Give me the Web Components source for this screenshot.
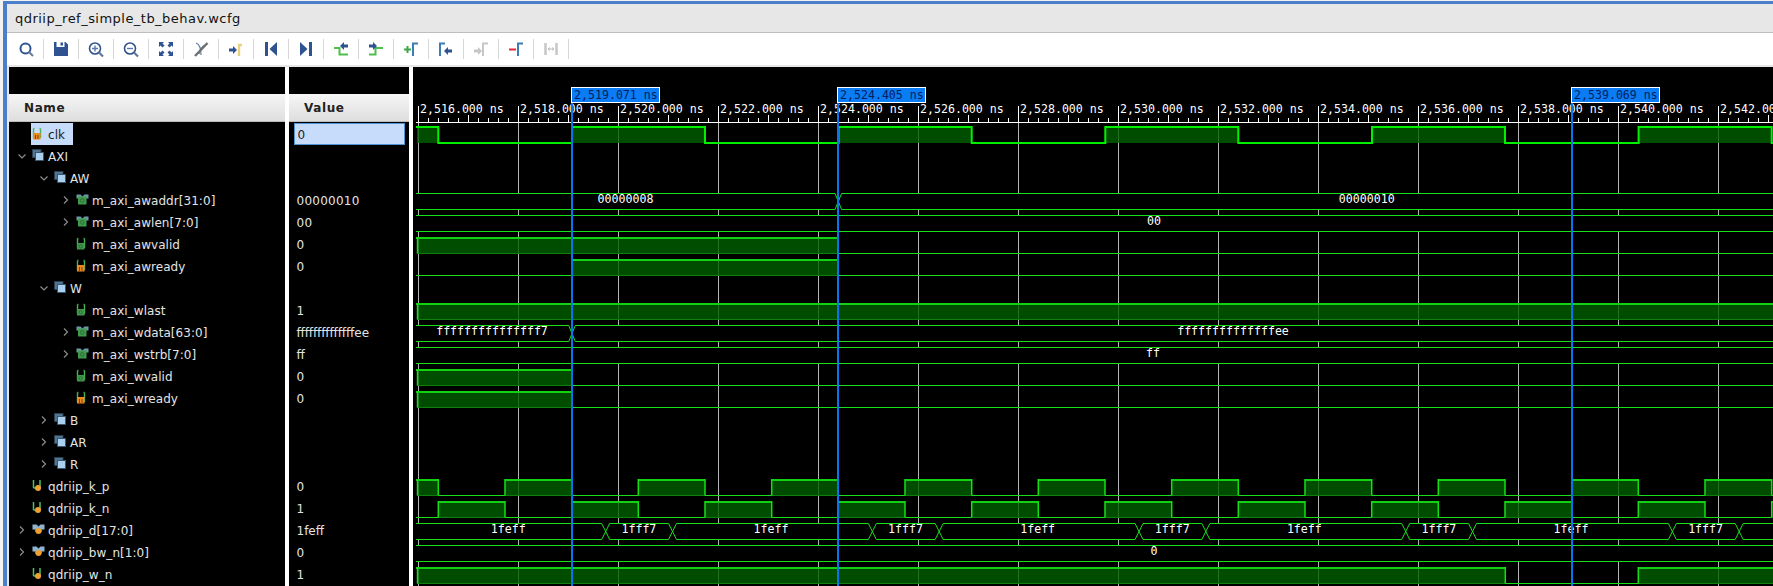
<!DOCTYPE html>
<html>
<head>
<meta charset="utf-8">
<title>qdriip_ref_simple_tb_behav.wcfg</title>
<style>
  html, body { margin: 0; height: 100%; background: #f2f2f2; overflow: hidden; }
  body { font-family: "DejaVu Sans", sans-serif; }
</style>
</head>
<body>
<wcfg-window title-text="qdriip_ref_simple_tb_behav.wcfg">
  <wave-toolbar></wave-toolbar>
  <wave-panel></wave-panel>
</wcfg-window>

<script>
// rows, top to bottom. icon: in/out = wire, bus-in = bus with green core, clk/bus-clk = orange dot
const ROWS = [
  { name:'clk', depth:0, icon:'out', value:'0', selected:true, wave:'clk' },
  { name:'AXI', depth:0, icon:'group', open:true },
  { name:'AW', depth:1, icon:'group', open:true },
  { name:'m_axi_awaddr[31:0]', depth:2, icon:'bus-in', open:false, value:'00000010', bus:{ hw:3.3, xs:[838.3], labels:[[625.5,'00000008'],[1366.7,'00000010']] } },
  { name:'m_axi_awlen[7:0]', depth:2, icon:'bus-in', open:false, value:'00', bus:{ xs:[], labels:[[1154,'00']] } },
  { name:'m_axi_awvalid', depth:2, icon:'in', value:'0', bit:{ start:1, edges:[838.3] } },
  { name:'m_axi_awready', depth:2, icon:'out', value:'0', bit:{ start:0, edges:[572,838.3] } },
  { name:'W', depth:1, icon:'group', open:true },
  { name:'m_axi_wlast', depth:2, icon:'in', value:'1', bit:{ start:1, edges:[] } },
  { name:'m_axi_wdata[63:0]', depth:2, icon:'bus-in', open:false, value:'ffffffffffffffee', bus:{ hw:3.3, xs:[572], labels:[[492,'fffffffffffffff7'],[1233,'ffffffffffffffee']] } },
  { name:'m_axi_wstrb[7:0]', depth:2, icon:'bus-in', open:false, value:'ff', bus:{ xs:[], labels:[[1153,'ff']] } },
  { name:'m_axi_wvalid', depth:2, icon:'in', value:'0', bit:{ start:1, edges:[572] } },
  { name:'m_axi_wready', depth:2, icon:'out', value:'0', bit:{ start:1, edges:[572] } },
  { name:'B', depth:1, icon:'group', open:false },
  { name:'AR', depth:1, icon:'group', open:false },
  { name:'R', depth:1, icon:'group', open:false },
  { name:'qdriip_k_p', depth:0, icon:'clk', value:'0', bit:{ start:1, edges:kEdges() } },
  { name:'qdriip_k_n', depth:0, icon:'clk', value:'1', bit:{ start:0, edges:kEdges() } },
  { name:'qdriip_d[17:0]', depth:0, icon:'bus-clk', open:false, value:'1feff', bus:dBus() },
  { name:'qdriip_bw_n[1:0]', depth:0, icon:'bus-clk', open:false, value:'0', bus:{ xs:[], labels:[[1154,'0']] } },
  { name:'qdriip_w_n', depth:0, icon:'clk', value:'1', bit:{ start:1, edges:[1505.3,1638.3] } },
];

function kEdges() {
  const out = [438.3];
  for (let x = 505; x < 1773; x += 66.667) out.push(Math.round(x * 10) / 10);
  return out;
}

function dBus() {
  const xs = [], labels = [[508.3, '1feff']];
  for (let i = 0; i < 5; i++) {
    const a = 605.7 + i * 266.67, b = a + 66.8;
    xs.push(a, b);
    labels.push([a + 33.2, '1fff7']);
    if (i < 4) labels.push([771 + i * 266.67, '1feff']);
  }
  return { hw:4, xs, labels };
}

class WcfgWindow extends HTMLElement {
  constructor() {
    super();
    this.attachShadow({ mode: 'open' });
    this.shadowRoot.innerHTML = `
      <style>
        :host { display:flex; flex-direction:column; height:585px; box-sizing:border-box; margin:1px 0 0 3px;
                border-top:3px solid #4b7fc9; border-left:4px solid #4b7fc9; background:#e7e7e7; }
        .title { height:29px; flex:none; display:flex; align-items:center; padding-left:8px; box-sizing:border-box;
                 border-bottom:1px solid #bdbdbd; font:13px "DejaVu Sans", sans-serif; color:#111; letter-spacing:.47px; }
        .body { flex:1; display:flex; flex-direction:column; min-height:0; }
      </style>
      <div class="title"></div>
      <div class="body"><slot></slot></div>`;
  }
  connectedCallback() {
    this.shadowRoot.querySelector('.title').textContent = this.getAttribute('title-text') || '';
  }
}

// toolbar icons, 20x20, page centre of each cell 35px apart
const NAVY = '#2f5390', GREEN = '#4cc04c', STEEL = '#3b7db5', GREY = '#c6c6c6';
const bracket = (c, x) => `<path d="M${x} 17V4.5H${x + 5}" fill="none" stroke="${c}" stroke-width="2"/>`;
const arrowR = (c, x, y) => `<path d="M${x} ${y - 1.5}h4v-2.5l4 4-4 4v-2.5h-4z" fill="${c}"/>`;
const arrowL = (c, x, y) => `<path d="M${x + 8} ${y - 1.5}h-4v-2.5l-4 4 4 4v-2.5h4z" fill="${c}"/>`;
const TOOL_ICONS = [
  `<circle cx="9.5" cy="9.5" r="5" fill="none" stroke="${NAVY}" stroke-width="2"/><path d="M13 13l4 4" stroke="#6b7f9c" stroke-width="2.2"/>`,
  `<path d="M3 3h2.500v5h8V3h1L17 5.500V17H3z" fill="${NAVY}"/><rect x="9.500" y="3.500" width="2.500" height="3" fill="${NAVY}"/>`,
  `<circle cx="9" cy="9.500" r="5.500" fill="none" stroke="${NAVY}" stroke-width="1.600"/><path d="M6 9.500h6M9 6.500v6" stroke="#5a77a8" stroke-width="1.400"/><path d="M13 13.500l4 4" stroke="#5f7595" stroke-width="2.200"/>`,
  `<circle cx="9" cy="9.500" r="5.500" fill="none" stroke="${NAVY}" stroke-width="1.600"/><path d="M6 9.500h6" stroke="#5a77a8" stroke-width="1.400"/><path d="M13 13.500l4 4" stroke="#5f7595" stroke-width="2.200"/>`,
  `<g fill="${NAVY}"><path d="M3 3h5L6.500 4.500 8.500 6.500 6.500 8.500 4.500 6.500 3 8z"/><path d="M17 3h-5l1.500 1.500-2 2 2 2 2-2L17 8z"/><path d="M3 17h5l-1.500-1.500 2-2-2-2-2 2L3 12z"/><path d="M17 17h-5l1.500-1.500-2-2 2-2 2 2L17 12z"/></g>`,
  `<path d="M5 4c3 1 5 5 5 12M14 6c-2 1-5 4-6 9" fill="none" stroke="#5a77a8" stroke-width="1.200"/><path d="M4 17L16.500 4" stroke="#6f6f6f" stroke-width="2.400"/>`,
  arrowR(NAVY, 3, 11) + `<path d="M13 17V6H16" fill="none" stroke="#e8d27c" stroke-width="2.400"/>`,
  `<path d="M4 3h3v14H4z" fill="${NAVY}"/><path d="M16 3v14L8.500 10z" fill="${NAVY}"/>`,
  `<path d="M13 3h3v14h-3z" fill="${NAVY}"/><path d="M4 3v14L11.500 10z" fill="${NAVY}"/>`,
  `<path d="M3 9h5.500v6.500H17" fill="none" stroke="${GREEN}" stroke-width="2"/>` + arrowL(NAVY, 9, 7),
  `<path d="M3 15.500h6.500V9H17" fill="none" stroke="${GREEN}" stroke-width="2"/>` + arrowR(NAVY, 3, 7),
  `<path d="M3 10.500h7M6.500 7v7" stroke="#3fa64f" stroke-width="2"/>` + bracket(STEEL, 12),
  bracket(STEEL, 4) + arrowL(NAVY, 8, 12),
  arrowR(GREY, 3, 12) + bracket(GREY, 12),
  `<path d="M3 10.500h7" stroke="#e8262e" stroke-width="2"/>` + bracket(STEEL, 12),
  `<path d="M4.500 4v12M15.500 4v12" stroke="${GREY}" stroke-width="2.500"/><path d="M7 10h6M7 10l2-1.500M7 10l2 1.500M13 10l-2-1.500M13 10l-2 1.500" stroke="#bdbdbd" fill="none"/>`,
];

class WaveToolbar extends HTMLElement {
  constructor() {
    super();
    this.attachShadow({ mode: 'open' });
    const cells = TOOL_ICONS.map(i => `<div class="cell"><svg width="20" height="20" viewBox="0 0 20 20">${i}</svg></div>`).join('');
    this.shadowRoot.innerHTML = `
      <style>
        :host { display:flex; flex:none; height:32px; padding-left:2px; margin-bottom:2px; background:#fff; align-items:center; }
        .cell { position:relative; width:35px; height:20px; box-sizing:border-box; border-right:1px solid #d6d6d6;
                display:flex; align-items:center; justify-content:center; }
        svg { display:block; }
      </style>${cells}`;
  }
}

const SIG_ICONS = {
  group: `<rect x=".5" y=".5" width="8.500" height="8" fill="#4f7590" stroke="#2c3f4f"/><rect x="3.500" y="3.500" width="8" height="8" fill="#a9d0ee" stroke="#37566e"/>`,
  in: `<path d="M1.500 11V1.500M8.500 11V1.500M1.500 1.500h1M8.500 1.500h-1" stroke="#49b35a" fill="none" stroke-width="1.400"/><rect x="1" y="6" width="7.500" height="6.500" fill="#3f9a4c"/><circle cx="4.700" cy="9.300" r="1.700" fill="none" stroke="#2e6f38"/>`,
  out: `<path d="M1.500 11V1.500M8.500 11V1.500M1.500 1.500h1M8.500 1.500h-1" stroke="#49b35a" fill="none" stroke-width="1.400"/><rect x="1" y="6" width="7.500" height="6.500" fill="#ea8a20"/><path d="M3.500 8v4M6 8v4" stroke="#7a4610"/>`,
  clk: `<path d="M1.500 9V1M1.500 9H4M8 1v8" stroke="#4fc060" fill="none" stroke-width="1.500"/><circle cx="6" cy="9" r="3" fill="#f0a030"/>`,
  'bus-in': `<path d="M.5 1.500h4l2 2 2-2h4v4h-12z" fill="#6f97a8"/><rect x="2" y="3.500" width="8.500" height="8" fill="#3f9a4c"/><circle cx="6.200" cy="7.500" r="1.800" fill="none" stroke="#2b6d36"/>`,
  'bus-clk': `<path d="M.5 1.500h4l2 2 2-2h4v5h-12z" fill="#8fb4d0"/><path d="M2.500 6h8l-1 3h-6z" fill="#6b8aa4"/><circle cx="6.500" cy="8" r="3" fill="#f0a030"/>`,
};

class NameColumn extends HTMLElement {
  constructor() {
    super();
    this.attachShadow({ mode: 'open' });
    this.shadowRoot.innerHTML = `
      <style>
        :host { display:block; background:#000; color:#e4e4e4; font:12px "DejaVu Sans", sans-serif; letter-spacing:.05px; }
        .row { height:22px; display:flex; align-items:center; white-space:nowrap; }
        .chev { width:12px; height:12px; flex:none; margin-right:3px; }
        .lbl { display:flex; align-items:center; height:22px; padding:0 7px 0 1px; }
        .lbl svg { width:13px; height:14px; margin-right:3px; flex:none; }
        .txt { padding-top:1px; }
        .row.sel .lbl { background:#c7dcfa; color:#222; padding-right:8px; }
      </style>
      <column-header label="Name" pad="15"></column-header>
      <div class="rows" style="margin-top:1px"></div>`;
  }
  connectedCallback() {
    const html = ROWS.map(r => {
      const chev = r.open === undefined ? '' :
        `<path d="${r.open ? 'M2.500 4.500L6 8l3.500-3.500' : 'M4 2.500L7.500 6 4 9.500'}" fill="none" stroke="#8c8c8c" stroke-width="1.200"/>`;
      return `<div class="row${r.selected ? ' sel' : ''}" style="padding-left:${7 + r.depth * 22}px">
        <svg class="chev" viewBox="0 0 12 12">${chev}</svg>
        <span class="lbl"><svg viewBox="0 0 13 14">${SIG_ICONS[r.icon]}</svg><span class="txt">${r.name}</span></span>
      </div>`;
    }).join('');
    this.shadowRoot.querySelector('.rows').innerHTML = html;
  }
}

class ValueColumn extends HTMLElement {
  constructor() {
    super();
    this.attachShadow({ mode: 'open' });
    this.shadowRoot.innerHTML = `
      <style>
        :host { display:block; background:#000; color:#e4e4e4; font:12px "DejaVu Sans", sans-serif; }
        .row { height:22px; display:flex; align-items:center; padding:1px 0 0 7.500px; box-sizing:border-box; white-space:nowrap; }
        .row.num { letter-spacing:.25px; }
        .row.sel { margin:0 4.500px; padding-left:3px; background:#c7dcfa; color:#222; border:1px solid #4f94d4; }
      </style>
      <column-header label="Value" pad="15"></column-header>
      <div class="rows" style="margin-top:1px"></div>`;
  }
  connectedCallback() {
    this.shadowRoot.querySelector('.rows').innerHTML = ROWS.map(r => {
      const cls = (r.selected ? ' sel' : '') + (/^[0-9]+$/.test(r.value || '') ? ' num' : '');
      return `<div class="row${cls}">${r.value || ''}</div>`;
    }).join('');
  }
}

class ColumnHeader extends HTMLElement {
  constructor() {
    super();
    this.attachShadow({ mode: 'open' });
    this.shadowRoot.innerHTML = `
      <style>
        :host { display:flex; align-items:center; height:28px; margin-top:27px; padding-top:1px; box-sizing:border-box;
                background:linear-gradient(#f6f6f6,#dedede); border-bottom:1px solid #bbb; color:#222;
                font:bold 12px "DejaVu Sans", sans-serif; letter-spacing:.6px; }
      </style><span></span>`;
  }
  connectedCallback() {
    const s = this.shadowRoot.querySelector('span');
    s.textContent = this.getAttribute('label');
    s.style.paddingLeft = this.getAttribute('pad') + 'px';
  }
}

// the waveform is a free canvas, drawn in page coordinates
class WaveView extends HTMLElement {
  constructor() {
    super();
    this.attachShadow({ mode: 'open' });
    this.shadowRoot.innerHTML = `
      <style>
        :host { display:block; background:#000; overflow:hidden; }
        svg { display:block; }
        text { font-family:"DejaVu Sans Mono", monospace; font-size:11.600px; fill:#fff; }
      </style>
      <svg width="1360" height="519" viewBox="413 67 1360 519"></svg>`;
  }

  connectedCallback() {
    const RAIL = '#18e018', W0 = 416, W1 = 1773, ROW0 = 123, RH = 22;
    let s = '';

    // time axis
    s += `<path d="M${W0} 122.500H${W1}" stroke="#fff"/>`;
    let ticks = '', grid = '';
    for (let x = 418, i = 0; x < W1; x += 10, i++) {
      const px = x + .5;
      if (i % 10 === 0) {
        ticks += `M${px} 106V122`;
        grid += `M${px} 123V586`;
        const t = 2516 + i / 5;
        const label = '2,' + String(t).slice(1) + '.000 ns';
        s += `<text x="${x + 2}" y="113">${label}</text>`;
      } else {
        ticks += `M${px} ${i % 5 === 0 ? 115 : 118}V122`;
      }
    }
    s += `<path d="${ticks}" stroke="#fff"/><path d="${grid}" stroke="#b4b4b4"/>`;

    // rows
    ROWS.forEach((r, i) => {
      const top = ROW0 + i * RH;
      if (r.wave === 'clk') s += this._clk(top);
      if (r.bit) s += this._bit(top, r.bit, RAIL, W1);
      if (r.bus) s += this._bus(top, r.bus, RAIL, W0, W1);
    });

    // cursors
    for (const [x, label] of [[571, '2,519.071 ns'], [837, '2,524.405 ns'], [1571, '2,539.069 ns']]) {
      s += `<rect x="${x}" y="102" width="2" height="484" fill="#0a74ec"/>`;
      s += `<rect x="${x + .5}" y="87.500" width="88" height="15" fill="#0a7cf5" stroke="#fff"/>`;
      s += `<text x="${x + 3}" y="99" style="fill:#00205a">${label}</text>`;
    }
    this.shadowRoot.querySelector('svg').innerHTML = s;
  }

  _clk(top) {
    const hi = top + 4, lo = top + 20, falls = [438.3, 705, 971.7, 1238.3, 1505, 1771.7], rises = [572, 838.6, 1105.3, 1372, 1638.6];
    let d = `M416 ${hi}H${falls[0]}V${lo}`, fill = `<rect x="417" y="${hi}" width="21" height="16" fill="#006000" fill-opacity=".8"/>`;
    rises.forEach((x, i) => {
      d += `H${x}V${hi}H${falls[i + 1]}V${lo}`;
      fill += `<rect x="${x}" y="${hi}" width="${falls[i + 1] - x}" height="16" fill="#006000" fill-opacity=".8"/>`;
    });
    d += 'H1773';
    return fill + `<path d="${d}" fill="none" stroke="#00f000" stroke-width="2"/>`;
  }

  _bit(top, bit, rail, end) {
    const hi = top + 4, lo = top + 20.5;
    let level = bit.start, x0 = 417, s = '', low = '', edges = '';
    const stops = bit.edges.concat([end]);
    for (const x of stops) {
      if (level) {
        s += `<rect x="${x0}" y="${hi}" width="${x - x0}" height="17" fill="#006000" fill-opacity=".8"/>`;
        s += `<path d="M${x0} ${lo}H${x}" stroke="#0c800c"/>`;
        s += `<path d="M${x0 === 417 ? 416 : x0} ${hi + 1}H${x}" stroke="#12d012" stroke-width="2"/>`;
      } else {
        low += `M${x0 === 417 ? 416 : x0} ${lo}H${x}`;
      }
      if (x < end) edges += `M${x} ${hi}V${lo}`;
      level = !level;
      x0 = x;
    }
    if (bit.start) edges += `M417.500 ${hi}V${lo}`;
    return s + `<path d="${low}" stroke="${rail}"/><path d="${edges}" stroke="#14e014" stroke-width="1.500"/>`;
  }

  _bus(top, bus, rail, x0, x1) {
    const hi = top + 4.5, lo = top + 20.5, hw = bus.hw || 0;
    let s = `<rect x="${x0}" y="${hi}" width="${x1 - x0}" height="16" fill="#000"/>`;
    let d = '', from = x0;
    for (const x of bus.xs) {
      d += `M${from} ${hi}H${x - hw}L${x + hw} ${lo}M${from} ${lo}H${x - hw}L${x + hw} ${hi}`;
      from = x + hw;
    }
    d += `M${from} ${hi}H${x1}M${from} ${lo}H${x1}`;
    s += `<path d="${d}" fill="none" stroke="${rail}"/>`;
    for (const [x, t] of bus.labels) s += `<text x="${x}" y="${top + 14}" text-anchor="middle">${t}</text>`;
    return s;
  }
}

class WavePanel extends HTMLElement {
  constructor() {
    super();
    this.attachShadow({ mode: 'open' });
    this.shadowRoot.innerHTML = `
      <style>
        :host { display:grid; grid-template-columns:276px 120px 1fr; column-gap:4px; flex:1; min-height:0;
                margin-left:2px; background:#fff; overflow:hidden; }
      </style>
      <name-column></name-column>
      <value-column></value-column>
      <wave-view></wave-view>`;
  }
}

customElements.define('column-header', ColumnHeader);
customElements.define('name-column', NameColumn);
customElements.define('value-column', ValueColumn);
customElements.define('wave-view', WaveView);
customElements.define('wave-panel', WavePanel);
customElements.define('wave-toolbar', WaveToolbar);
customElements.define('wcfg-window', WcfgWindow);
</script>
</body>
</html>
